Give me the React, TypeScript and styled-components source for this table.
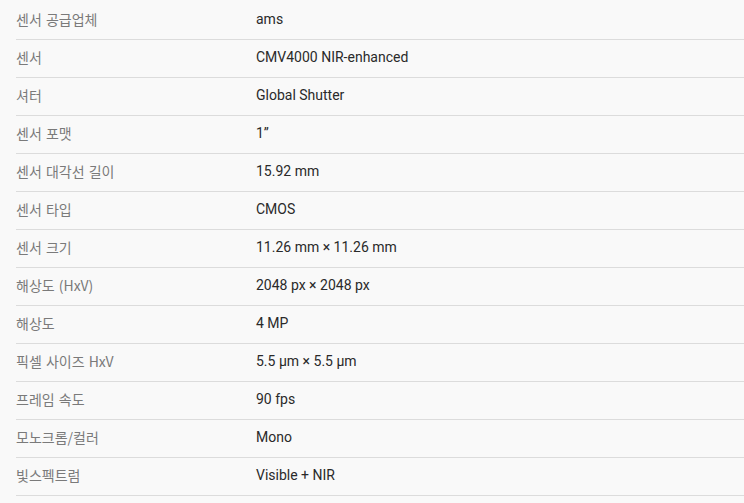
import React from "react";
import styled, { createGlobalStyle } from "styled-components";

const Global = createGlobalStyle`
  html, body { margin: 0; padding: 0; background: #f9f9f9; }
  body { font-family: Roboto, "Noto Sans CJK KR", sans-serif; }
`;

const Table = styled.div`
  display: flex;
  flex-direction: column;
  padding: 2px 0 0 16px;
`;

const Row = styled.div`
  display: grid;
  grid-template-columns: 240px 1fr;
  align-items: center;
  box-sizing: border-box;
  height: 38px;
  padding-bottom: 3px;
  border-bottom: 1px solid #dcdcdc;
`;

const Label = styled.div`
  font-family: "Noto Sans CJK KR", sans-serif;
  font-size: 14px;
  color: #7a7a7a;
  word-spacing: 1px;
`;

const Value = styled.div`
  font-family: Roboto, "Noto Sans CJK KR", sans-serif;
  font-size: 14px;
  color: #2a2a2a;
`;

const rows: [string, string][] = [
  ["센서 공급업체", "ams"],
  ["센서", "CMV4000 NIR-enhanced"],
  ["셔터", "Global Shutter"],
  ["센서 포맷", "1”"],
  ["센서 대각선 길이", "15.92 mm"],
  ["센서 타입", "CMOS"],
  ["센서 크기", "11.26 mm × 11.26 mm"],
  ["해상도 (HxV)", "2048 px × 2048 px"],
  ["해상도", "4 MP"],
  ["픽셀 사이즈 HxV", "5.5 µm × 5.5 µm"],
  ["프레임 속도", "90 fps"],
  ["모노크롬/컬러", "Mono"],
  ["빛스펙트럼", "Visible + NIR"],
];

export default function App() {
  return (
    <>
      <Global />
      <Table>
        {rows.map(([l, v]) => (
          <Row key={l}>
            <Label>{l}</Label>
            <Value>{v}</Value>
          </Row>
        ))}
      </Table>
    </>
  );
}
